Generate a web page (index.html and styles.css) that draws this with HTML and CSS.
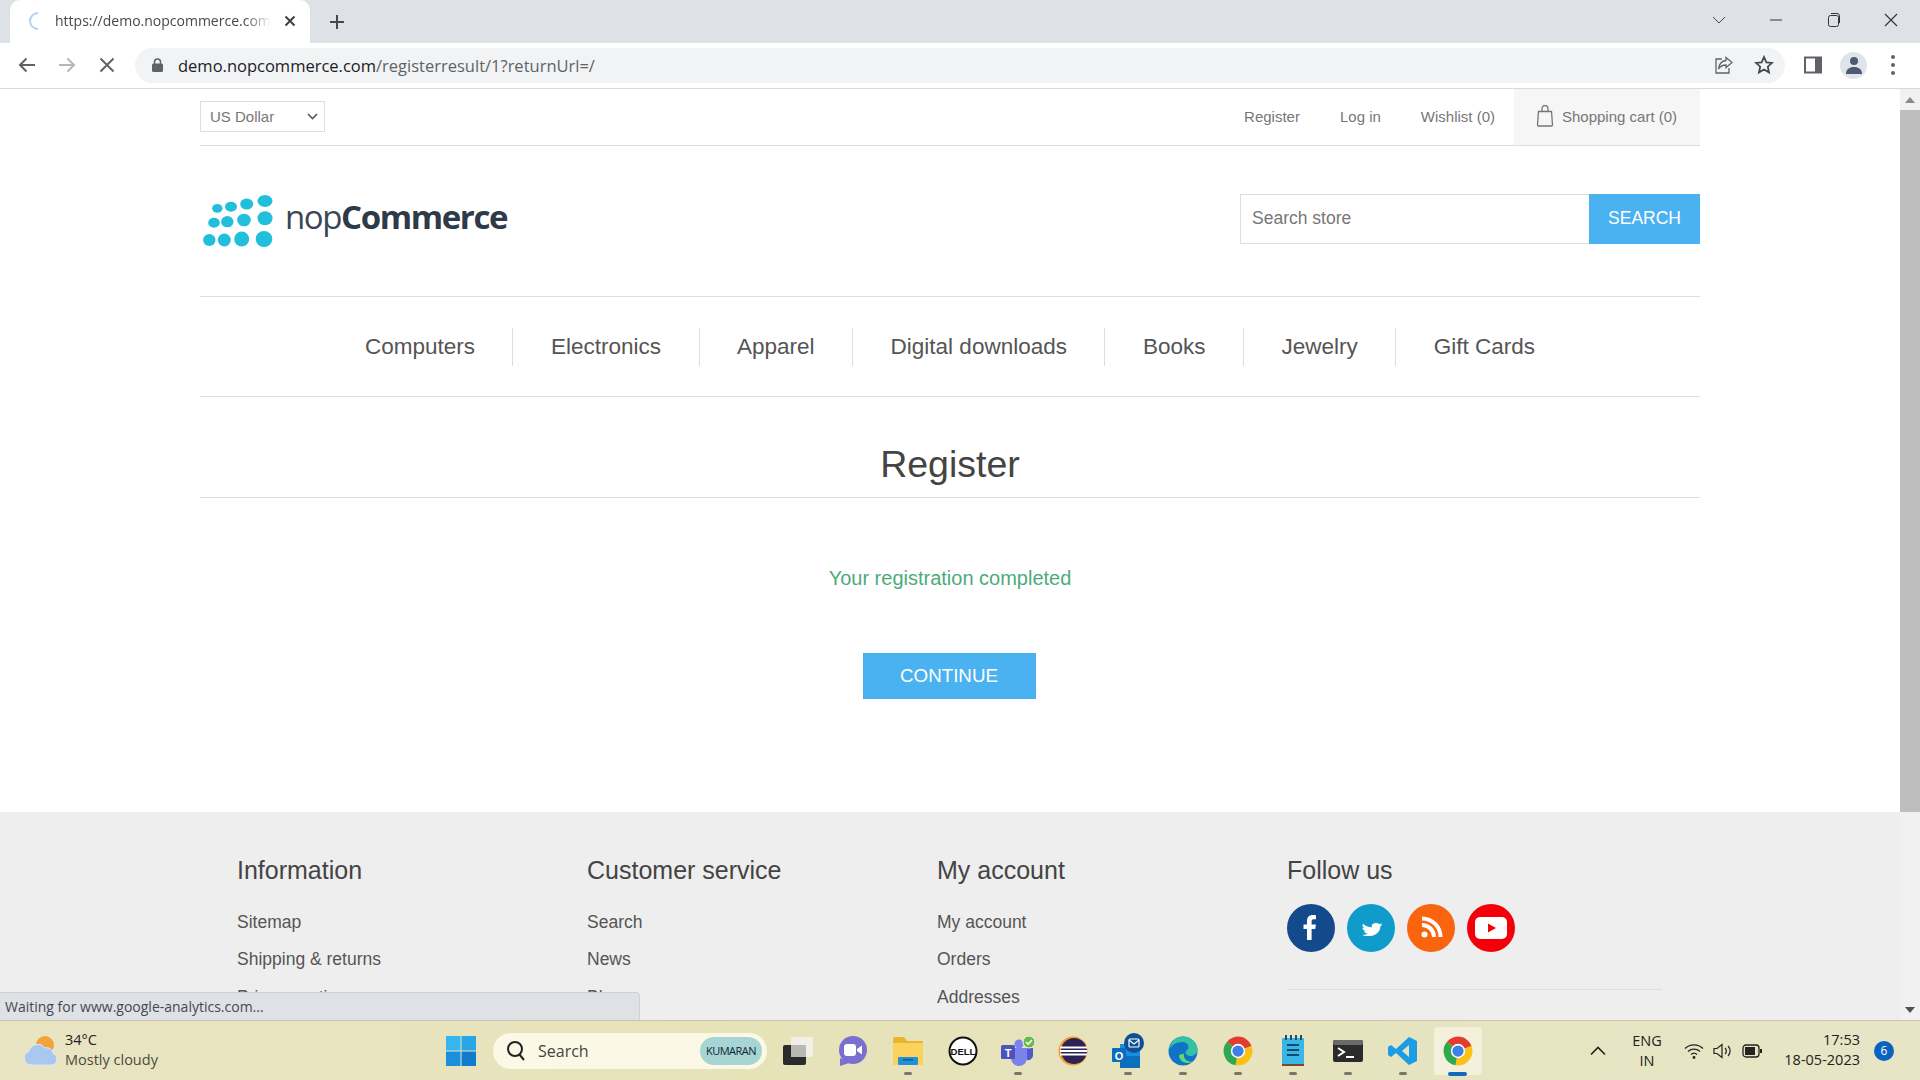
FILE: index.html
```html
<!DOCTYPE html>
<html lang="en">
<head>
    <meta charset="UTF-8">
    <title>nopCommerce demo store. Register</title>
    <link rel="stylesheet" href="styles.css">
</head>
<body>
<svg class="defs" width="0" height="0">
    <symbol id="chrome" viewBox="0 0 48 48">
        <path d="M24 24L6.400 9.200A23 23 0 0 1 45.600 16.100z" fill="#e33b2e"/>
        <path d="M24 24L45.600 16.100A23 23 0 0 1 20 46.650z" fill="#fbc116"/>
        <path d="M24 24L20 46.650A23 23 0 0 1 6.400 9.200z" fill="#2fa84f"/>
        <circle cx="24" cy="24" r="11.500" fill="#fff"/>
        <circle cx="24" cy="24" r="9" fill="#3f7fe8"/>
    </symbol>
</svg>

<div class="tabbar">
    <div class="tab">
        <svg class="spinner" width="18" height="22" viewBox="0 0 18 22"><path d="M13 3a8 8 0 0 0 0 16" fill="none" stroke="#b6cfee" stroke-width="2"/></svg>
        <span class="tab-title">https://demo.nopcommerce.com</span>
        <svg class="tab-close" width="12" height="12" viewBox="0 0 12 12"><path d="M1.500 1.500l9 9M10.500 1.500l-9 9" stroke="#3c4043" stroke-width="2"/></svg>
    </div>
    <svg class="new-tab" width="16" height="16" viewBox="0 0 16 16"><path d="M8 1v14M1 8h14" stroke="#45494d" stroke-width="2"/></svg>
    <div class="window-btns">
        <svg width="14" height="10" viewBox="0 0 14 10"><path d="M1 2l6 6 6-6" fill="none" stroke="#45494d"/></svg>
        <svg width="14" height="4" viewBox="0 0 14 4"><path d="M1 2h12" stroke="#333" stroke-width="1"/></svg>
        <svg width="14" height="16" viewBox="0 0 14 16"><rect x="1.500" y="3.500" width="10" height="11" rx="2" fill="none" stroke="#333"/><path d="M4 1.500h6a2.500 2.500 0 0 1 2.500 2.500v7" fill="none" stroke="#333"/></svg>
        <svg width="14" height="14" viewBox="0 0 14 14"><path d="M1 1l12 12M13 1L1 13" stroke="#333" stroke-width="1.100"/></svg>
    </div>
</div>

<div class="toolbar">
    <svg class="nav-btn" width="18" height="16" viewBox="0 0 18 16"><path d="M17 8H2M8.500 1.500L2 8l6.500 6.500" fill="none" stroke="#5f6368" stroke-width="2"/></svg>
    <svg class="nav-btn" width="18" height="16" viewBox="0 0 18 16"><path d="M1 8h15M9.500 1.500L16 8l-6.500 6.500" fill="none" stroke="#b4b7bb" stroke-width="2"/></svg>
    <svg class="nav-btn" width="18" height="16" viewBox="0 0 16 16"><path d="M1.500 1.500l13 13M14.500 1.500l-13 13" stroke="#5f6368" stroke-width="2"/></svg>
    <div class="omnibox">
        <svg width="11" height="14" viewBox="0 0 11 14"><rect x="0" y="5.500" width="11" height="8.500" rx="1.500" fill="#5f6368"/><path d="M2.500 6V4a3 3 0 0 1 6 0v2" fill="none" stroke="#5f6368" stroke-width="1.500"/></svg>
        <span class="url"><span class="url-host">demo.nopcommerce.com</span>/registerresult/1?returnUrl=/</span>
        <svg class="omni-share" width="20" height="20" viewBox="0 0 20 20"><path d="M12 2.500l6 5-6 5V10C8 10 6 11.500 4.500 14 5 9.500 7.500 6 12 5.500z" fill="none" stroke="#5f6368" stroke-width="1.300"/><path d="M8 4H2v14h13v-5" fill="none" stroke="#5f6368" stroke-width="1.300"/></svg>
        <svg class="omni-star" width="20" height="20" viewBox="0 0 20 20"><path d="M10 2l2.400 5.300 5.600.6-4.200 3.800 1.200 5.700-5-2.900-5 2.900 1.200-5.700L2 7.900l5.600-.6z" fill="none" stroke="#45494d" stroke-width="1.800"/></svg>
    </div>
    <svg class="side-panel" width="18" height="18" viewBox="0 0 18 18"><rect x="1" y="1.500" width="16" height="15" fill="#fff" stroke="#5f6368" stroke-width="2"/><rect x="11" y="1.500" width="6" height="15" fill="#5f6368"/></svg>
    <div class="profile">
        <svg width="18" height="18" viewBox="0 0 18 18"><circle cx="9" cy="5" r="4" fill="#4d5a70"/><path d="M1 18c0-5 3.500-7 8-7s8 2 8 7z" fill="#4d5a70"/></svg>
    </div>
    <div class="dots"><i></i><i></i><i></i></div>
</div>

<div class="viewport">
    <div class="page">
        <div class="container">
            <div class="header-top">
                <div class="currency-wrap">
                    <select class="currency"><option>US Dollar</option></select>
                    <svg class="currency-arrow" width="11" height="7" viewBox="0 0 11 7"><path d="M1 1l4.500 4.500L10 1" fill="none" stroke="#555" stroke-width="1.600"/></svg>
                </div>
                <div class="header-links">
                    <a class="header-link">Register</a>
                    <a class="header-link">Log in</a>
                    <a class="header-link">Wishlist (0)</a>
                    <a class="cart-link">
                        <svg width="18" height="22" viewBox="0 0 18 22"><path d="M2.500 6.500h13l1 13.500a1 1 0 0 1-1 1h-13a1 1 0 0 1-1-1zM6 6.500V3.500a3 3 0 0 1 6 0v3" fill="#f6f6f6" stroke="#777" stroke-width="1.300"/></svg>
                        Shopping cart (0)
                    </a>
                </div>
            </div>
            <div class="header-main">
                <div class="logo">
                    <svg width="78" height="56" viewBox="0 0 78 56">
                        <g fill="#22bfdc">
                            <ellipse cx="14.300" cy="17.300" rx="5.200" ry="4.400"/><ellipse cx="28" cy="15.700" rx="6" ry="5"/><ellipse cx="43.700" cy="13" rx="6.500" ry="5.500"/><ellipse cx="62" cy="10" rx="7.500" ry="6"/>
                            <ellipse cx="11" cy="31.700" rx="5.800" ry="5"/><ellipse cx="24.300" cy="30.700" rx="6.200" ry="5.600"/><ellipse cx="41" cy="29" rx="6.800" ry="6.300"/><ellipse cx="62" cy="27.300" rx="7.500" ry="7"/>
                            <ellipse cx="6.300" cy="49" rx="6.200" ry="6"/><ellipse cx="21.300" cy="49" rx="6.500" ry="6.500"/><ellipse cx="38.700" cy="48" rx="7.500" ry="7.500"/><ellipse cx="61" cy="48" rx="8.300" ry="8"/>
                        </g>
                    </svg>
                    <span class="logo-text">nop<b>Commerce</b></span>
                </div>
                <div class="search-box">
                    <input class="search-input" type="text" placeholder="Search store">
                    <button class="search-btn">SEARCH</button>
                </div>
            </div>
            <ul class="main-menu">
                <li>Computers</li>
                <li>Electronics</li>
                <li>Apparel</li>
                <li>Digital downloads</li>
                <li>Books</li>
                <li>Jewelry</li>
                <li>Gift Cards</li>
            </ul>
            <h1 class="page-title">Register</h1>
            <div class="result">Your registration completed</div>
            <div class="buttons"><button class="continue-btn">CONTINUE</button></div>
        </div>

        <div class="footer">
            <div class="footer-cols">
                <div>
                    <h3>Information</h3>
                    <ul>
                        <li>Sitemap</li>
                        <li>Shipping &amp; returns</li>
                        <li>Privacy notice</li>
                    </ul>
                </div>
                <div>
                    <h3>Customer service</h3>
                    <ul>
                        <li>Search</li>
                        <li>News</li>
                        <li>Blog</li>
                    </ul>
                </div>
                <div>
                    <h3>My account</h3>
                    <ul>
                        <li>My account</li>
                        <li>Orders</li>
                        <li>Addresses</li>
                    </ul>
                </div>
                <div>
                    <h3>Follow us</h3>
                    <div class="social">
                        <svg width="48" height="48" viewBox="0 0 48 48"><circle cx="24" cy="24" r="24" fill="#134a8c"/><path d="M20 36V25h-3.500v-4.500H20V17c0-4 2.300-6 5.800-6 1.500 0 2.700.1 3.200.2v4.100h-2.200c-1.800 0-2.200.9-2.200 2.100v3.100h4.300l-.6 4.500h-3.700v11z" fill="#fff"/></svg>
                        <svg width="48" height="48" viewBox="0 0 48 48"><circle cx="24" cy="24" r="24" fill="#0f9ccb"/><path transform="translate(2.400 8.300) scale(.9 .7)" d="M37 17.500c-1 .5-1.800.6-2.800.8 1-.6 1.700-1.500 2-2.600-.9.500-1.900.9-3 1.100a4.800 4.800 0 0 0-8.200 4.400c-4-.2-7.500-2.100-9.800-5-1.300 2.300-.6 5 1.500 6.400-.8 0-1.500-.2-2.200-.6 0 2.300 1.700 4.300 3.900 4.800-.7.200-1.500.2-2.200.1.600 1.900 2.400 3.300 4.500 3.300-2 1.600-4.600 2.300-7.100 2 6.500 4 20.500 2 20.900-12.400.9-.7 1.800-1.400 2.500-2.300z" fill="#fff"/></svg>
                        <svg width="48" height="48" viewBox="0 0 48 48"><circle cx="24" cy="24" r="24" fill="#fa640f"/><circle cx="17.500" cy="30.500" r="3" fill="#fff"/><path d="M15 21a12 12 0 0 1 12 12M15 14.500A18.500 18.500 0 0 1 33.500 33" fill="none" stroke="#fff" stroke-width="4"/></svg>
                        <svg width="48" height="48" viewBox="0 0 48 48"><circle cx="24" cy="24" r="24" fill="#f40009"/><rect x="8" y="13" width="32" height="22" rx="5" fill="#fff"/><path d="M21 19.500l8 4.500-8 4.500z" fill="#f40009"/></svg>
                    </div>
                    <div class="footer-divider"></div>
                </div>
            </div>
        </div>
    </div>

    <div class="scrollbar">
        <div class="scroll-arrow"><svg width="10" height="6" viewBox="0 0 10 6"><path d="M5 0l5 6H0z" fill="#8a8a8a"/></svg></div>
        <div class="scroll-thumb"></div>
        <div class="scroll-track"></div>
        <div class="scroll-arrow"><svg width="10" height="6" viewBox="0 0 10 6"><path d="M0 0h10L5 6z" fill="#505050"/></svg></div>
    </div>

    <div class="status-bubble">Waiting for www.google-analytics.com...</div>
</div>

<div class="taskbar">
    <div class="weather">
        <svg width="36" height="34" viewBox="0 0 36 34">
            <circle cx="23" cy="11" r="9" fill="#f2a33a"/>
            <path d="M9 31a7 7 0 0 1-2-13.600A9 9 0 0 1 23 14a6 6 0 0 1 8 5.500A6 6 0 0 1 30 31z" fill="#a9c8ef" stroke="#dfe9f5"/>
        </svg>
        <div class="weather-text">
            <span class="weather-temp">34°C</span>
            <span>Mostly cloudy</span>
        </div>
    </div>
    <svg class="start" width="30" height="30" viewBox="0 0 30 30">
        <rect x="0" y="0" width="14.500" height="14.500" fill="#35b6ee"/>
        <rect x="15.500" y="0" width="14.500" height="14.500" fill="#2aa5e6"/>
        <rect x="0" y="15.500" width="14.500" height="14.500" fill="#1a8fdb"/>
        <rect x="15.500" y="15.500" width="14.500" height="14.500" fill="#0f7ccf"/>
    </svg>
    <div class="task-search">
        <svg width="20" height="22" viewBox="0 0 20 22"><circle cx="9" cy="9" r="7" fill="none" stroke="#222" stroke-width="2"/><path d="M13.500 14.500L18 20" stroke="#222" stroke-width="2"/></svg>
        <span class="task-search-label">Search</span>
        <span class="kumaran">KUMARAN</span>
    </div>
    <div class="task-icons">
        <div class="task-icon">
            <svg width="30" height="28" viewBox="0 0 30 28"><rect x="0" y="8" width="23" height="20" rx="2" fill="#2b2b2b"/><rect x="8" y="0" width="22" height="20" rx="2" fill="#f1f0e8"/><rect x="8" y="8" width="15" height="12" fill="#b9b9b4"/></svg>
        </div>
        <div class="task-icon">
            <svg width="30" height="30" viewBox="0 0 30 30"><circle cx="15" cy="14" r="14" fill="#7b6fd0"/><path d="M2 22v8l9-3z" fill="#7b6fd0"/><rect x="6" y="8" width="12" height="12" rx="3" fill="#fff"/><path d="M19 13l5-3.500v9L19 15z" fill="#fff"/></svg>
        </div>
        <div class="task-icon running">
            <svg width="30" height="28" viewBox="0 0 30 28"><path d="M0 2a2 2 0 0 1 2-2h9l3 4h16v24H0z" fill="#e9b52a"/><rect x="0" y="6" width="30" height="22" fill="#fbd35c"/><rect x="5" y="20" width="20" height="8" rx="1" fill="#1f8fd6"/><rect x="10" y="22" width="10" height="1.500" fill="#0b5d9c"/></svg>
        </div>
        <div class="task-icon">
            <svg width="30" height="30" viewBox="0 0 30 30"><circle cx="15" cy="15" r="13.500" fill="#fff" stroke="#111" stroke-width="2"/><text class="dell-text" x="15" y="18.500" text-anchor="middle">DELL</text></svg>
        </div>
        <div class="task-icon running">
            <svg width="36" height="30" viewBox="0 0 36 30"><circle cx="19" cy="8" r="4.500" fill="#7b83eb"/><path d="M11 12h16v10a8 8 0 0 1-16 0z" fill="#7b83eb"/><path d="M27 12h6v8a5 5 0 0 1-6 4z" fill="#5059c9"/><rect x="1" y="9" width="14" height="14" rx="1.500" fill="#4b53bc"/><text class="teams-t" x="8" y="20.500" text-anchor="middle">T</text><circle cx="29" cy="6" r="6" fill="#6bb84b" stroke="#eee"/><path d="M26 6l2.200 2.200L32 4" fill="none" stroke="#fff" stroke-width="1.500"/></svg>
        </div>
        <div class="task-icon">
            <svg width="30" height="30" viewBox="0 0 30 30"><circle cx="15" cy="15" r="14.500" fill="#f39c2e"/><circle cx="16" cy="15" r="13" fill="#2c2255"/><rect x="2" y="10.500" width="27" height="2" fill="#fff"/><rect x="2" y="14" width="27" height="2" fill="#fff"/><rect x="2" y="17.500" width="27" height="2" fill="#fff"/></svg>
        </div>
        <div class="task-icon running">
            <svg width="34" height="36" viewBox="0 0 34 36"><rect x="9" y="11" width="20" height="24" fill="#1490df"/><rect x="9" y="23" width="20" height="12" fill="#0a6fbd"/><rect x="1" y="15" width="14" height="14" rx="1" fill="#0f6cbd"/><text class="teams-t" x="8" y="26.500" text-anchor="middle">O</text><circle cx="23" cy="10" r="10" fill="#0f4f94"/><rect x="18" y="6" width="10" height="8" rx="1" fill="none" stroke="#fff" stroke-width="1.200"/><path d="M18 7l5 4 5-4" fill="none" stroke="#fff" stroke-width="1.200"/></svg>
        </div>
        <div class="task-icon running">
            <svg width="30" height="30" viewBox="0 0 30 30"><circle cx="15" cy="15" r="14.500" fill="#0f73c6"/><path d="M1 14C2 6 8 .5 15 .5c8 0 14.500 6 14.500 13 0 4-3 6.500-7 6.500-3 0-5-1.500-5-3 0-3 3-3 3-6 0-3-3-5-6-5C8 6 3 9 1 14z" fill="#33c3a4"/><path d="M11 19c0 5 4 8 9 8 2 0 3.500-.5 5-1.500-6 1-10-3-9-8z" fill="#5fd876"/></svg>
        </div>
        <div class="task-icon running"><svg width="30" height="30"><use href="#chrome"/></svg></div>
        <div class="task-icon running">
            <svg width="24" height="32" viewBox="0 0 24 32"><rect x="1" y="3" width="22" height="27" rx="1" fill="#38b6e8"/><rect x="1" y="29" width="22" height="2" fill="#7a4a2b"/><path d="M5 0v5M10 0v5M15 0v5M20 0v5" stroke="#1d4e6e" stroke-width="2"/><path d="M6 10h12M6 15h12M6 20h12" stroke="#134a6b" stroke-width="2"/></svg>
        </div>
        <div class="task-icon running">
            <svg width="30" height="22" viewBox="0 0 30 22"><rect width="30" height="22" rx="2" fill="#2b2b2b"/><rect width="30" height="5" rx="2" fill="#6a6a6a"/><path d="M5 8l6 4-6 4" fill="none" stroke="#fff" stroke-width="2"/><path d="M13 17h8" stroke="#fff" stroke-width="2"/></svg>
        </div>
        <div class="task-icon running">
            <svg width="30" height="30" viewBox="0 0 30 30"><path d="M21 1l8 4v20l-8 4-13-12-5 4-3-2V11l3-2 5 4zM21 9l-7 6 7 6z" fill="#1a9ce6"/></svg>
        </div>
        <div class="task-icon active"><svg width="30" height="30"><use href="#chrome"/></svg></div>
    </div>
    <div class="tray">
        <svg class="tray-up" width="16" height="10" viewBox="0 0 16 10"><path d="M1 8.500l7-7 7 7" fill="none" stroke="#222" stroke-width="1.600"/></svg>
        <div class="tray-lang">ENG<br>IN</div>
        <svg width="20" height="16" viewBox="0 0 20 16"><path d="M1 5.500a13 13 0 0 1 18 0M4 8.500a9 9 0 0 1 12 0M7 11.500a4.500 4.500 0 0 1 6 0" fill="none" stroke="#222" stroke-width="1.300"/><circle cx="10" cy="14.500" r="1.400" fill="#222"/></svg>
        <svg width="20" height="16" viewBox="0 0 20 16"><path d="M1 5.500h3L9 1.500v13L4 10.500H1z" fill="none" stroke="#222" stroke-width="1.200"/><path d="M12 5a4 4 0 0 1 0 6M15 3a7 7 0 0 1 0 10" fill="none" stroke="#222" stroke-width="1.200"/></svg>
        <svg width="21" height="14" viewBox="0 0 21 14"><rect x="1" y="1" width="16" height="12" rx="3" fill="none" stroke="#222" stroke-width="1.300"/><rect x="3" y="3" width="10" height="8" fill="#222"/><rect x="18" y="5" width="2" height="4" fill="#222"/></svg>
        <div class="clock">17:53<br>18-05-2023</div>
        <span class="notif">6</span>
    </div>
</div>
</body>
</html>
```

FILE: styles.css
```css
* {
    box-sizing: border-box;
}

html, body {
    margin: 0;
    height: 1080px;
    overflow: hidden;
}

body {
    display: flex;
    flex-direction: column;
    font-family: "Liberation Sans", Arial, sans-serif;
    color: #444;
    background: #fff;
}

ul {
    list-style: none;
    margin: 0;
    padding: 0;
}

.defs {
    position: absolute;
}

/* browser chrome */
.tabbar {
    height: 43px;
    flex: none;
    display: flex;
    align-items: center;
    background: #dee1e6;
    font-family: "Open Sans", sans-serif;
}

.tab {
    width: 300px;
    height: 43px;
    margin-left: 10px;
    padding: 0 14px 2px 15px;
    display: flex;
    align-items: center;
    background: #fff;
    border-radius: 10px 10px 0 0;
}

.spinner {
    flex: none;
    margin-right: 12px;
}

.tab-title {
    width: 216px;
    flex: none;
    overflow: hidden;
    white-space: nowrap;
    font-size: 14px;
    color: #45494d;
    -webkit-mask-image: linear-gradient(90deg, #000 88%, transparent);
    mask-image: linear-gradient(90deg, #000 88%, transparent);
}

.tab-close {
    flex: none;
    margin-left: 13px;
}

.new-tab {
    margin-left: 19px;
}

.window-btns {
    margin-left: auto;
    width: 208px;
    padding: 0 22px 4px 0;
    display: flex;
    justify-content: space-between;
    align-items: center;
}

.toolbar {
    height: 46px;
    flex: none;
    display: flex;
    align-items: center;
    padding: 0 0 1px 18px;
    background: #fff;
    border-bottom: 1px solid #d9dadc;
}

.nav-btn {
    margin-right: 22px;
}

.omnibox {
    width: 1650px;
    height: 35px;
    margin-left: -3px;
    padding: 0 0 0 17px;
    display: flex;
    align-items: center;
    background: #f1f3f4;
    border-radius: 18px;
}

.url {
    margin-left: 15px;
    font-family: "Open Sans", sans-serif;
    font-size: 16.500px;
    color: #5f6368;
}

.url-host {
    color: #202124;
}

.omni-share {
    margin-left: auto;
}

.omni-star {
    margin: 0 11px 0 20px;
}

.side-panel {
    margin-left: 19px;
}

.profile {
    width: 27px;
    height: 27px;
    margin-left: 18px;
    display: flex;
    align-items: center;
    justify-content: center;
    background: #dfe3ea;
    border-radius: 50%;
}

.dots {
    margin-left: 24px;
    display: flex;
    flex-direction: column;
    gap: 4px;
}

.dots i {
    display: block;
    width: 4px;
    height: 4px;
    border-radius: 50%;
    background: #5f6368;
}

/* page */
.viewport {
    position: relative;
    flex: 1;
    min-height: 0;
    display: flex;
    overflow: hidden;
}

.page {
    flex: 1;
    min-width: 0;
    overflow: hidden;
    background: #fff;
}

.container {
    width: 1500px;
    margin: 0 auto;
}

.header-top {
    height: 57px;
    display: flex;
    align-items: center;
    justify-content: space-between;
    border-bottom: 1px solid #ddd;
}

.currency-wrap {
    position: relative;
    display: flex;
    margin-bottom: 1px;
}

.currency {
    width: 125px;
    height: 31px;
    padding: 0 0 1px 9px;
    border: 1px solid #ddd;
    background: #fff;
    font-family: "Liberation Sans", Arial, sans-serif;
    font-size: 15px;
    color: #777;
    appearance: none;
}

.currency-arrow {
    position: absolute;
    right: 7px;
    top: 12px;
    pointer-events: none;
}

.header-links {
    height: 56px;
    display: flex;
    align-items: center;
    font-size: 15px;
    color: #777;
}

.header-link {
    margin-right: 40px;
    padding-bottom: 2px;
}

.header-link:nth-child(3) {
    margin-right: 19px;
}

.cart-link {
    width: 186px;
    height: 56px;
    padding: 0 0 2px 22px;
    display: flex;
    align-items: center;
    gap: 8px;
    background: #f6f6f6;
}

.header-main {
    padding: 45px 0 49px;
    display: flex;
    align-items: center;
    justify-content: space-between;
    border-bottom: 1px solid #ddd;
}

.logo {
    display: flex;
    align-items: center;
    padding-left: 3px;
    gap: 4px;
}

.logo-text {
    padding-bottom: 5px;
    font-family: "Open Sans", sans-serif;
    font-size: 33px;
    letter-spacing: -1.400px;
    color: #3b4654;
}

.logo-text b {
    font-weight: 700;
    color: #2f3a48;
}

.search-box {
    display: flex;
}

.search-input {
    width: 349px;
    height: 50px;
    padding: 0 11px 2px;
    border: 1px solid #ddd;
    border-right: none;
    outline: none;
    font-family: "Liberation Sans", Arial, sans-serif;
    font-size: 17.500px;
}

.search-input::placeholder {
    color: #777;
    opacity: 1;
}

.search-btn {
    width: 111px;
    height: 50px;
    padding-bottom: 2px;
    border: none;
    background: #4ab2f1;
    color: #fff;
    font-family: "Liberation Sans", Arial, sans-serif;
    font-size: 17.500px;
}

.main-menu {
    height: 100px;
    display: flex;
    align-items: center;
    justify-content: center;
    border-bottom: 1px solid #ddd;
    font-size: 22.500px;
}

.main-menu li {
    height: 38px;
    padding: 0 37.500px;
    line-height: 38px;
    color: #555;
}

.main-menu li + li {
    border-left: 1px solid #ddd;
}

.page-title {
    margin: 0;
    padding: 45px 0 10px;
    border-bottom: 1px solid #ddd;
    font-size: 37.500px;
    font-weight: 400;
    line-height: 45px;
    text-align: center;
    color: #444;
}

.result {
    margin-top: 70px;
    font-size: 20px;
    line-height: 20px;
    text-align: center;
    color: #4cab7a;
}

.buttons {
    margin-top: 65px;
    padding-right: 2px;
    text-align: center;
}

.continue-btn {
    width: 173px;
    height: 46px;
    border: none;
    background: #4ab2f1;
    color: #fff;
    font-family: "Liberation Sans", Arial, sans-serif;
    font-size: 18.750px;
}

/* footer */
.footer {
    margin-top: 113px;
    padding-top: 43px;
    height: 300px;
    background: #eee;
}

.footer-cols {
    width: 1500px;
    margin: 0 auto;
    padding-left: 37px;
    display: grid;
    grid-template-columns: 350px 350px 350px 375px;
}

.footer-cols h3 {
    margin: 0 0 18.500px;
    font-size: 25px;
    font-weight: 400;
    line-height: 30px;
    color: #444;
}

.footer-cols li {
    height: 37.500px;
    line-height: 37.500px;
    font-size: 17.500px;
    color: #555;
}

.social {
    display: flex;
    gap: 12px;
    margin-top: 19px;
}

.footer-divider {
    margin-top: 37px;
    border-top: 1px solid #ddd;
}

/* scrollbar */
.scrollbar {
    width: 20px;
    flex: none;
    display: flex;
    flex-direction: column;
    background: #f1f1f1;
}

.scroll-arrow {
    height: 21px;
    display: flex;
    align-items: center;
    justify-content: center;
}

.scroll-thumb {
    height: 702px;
    background: #bebebe;
}

.scroll-track {
    flex: 1;
}

.status-bubble {
    position: absolute;
    left: 0;
    bottom: 0;
    width: 640px;
    height: 28px;
    padding-left: 5px;
    line-height: 28px;
    background: #dee1e6;
    border-top: 1px solid #cdd0d5;
    border-right: 1px solid #cdd0d5;
    border-top-right-radius: 4px;
    font-family: "Open Sans", sans-serif;
    font-size: 14px;
    color: #45494d;
}

/* windows taskbar */
.taskbar {
    height: 60px;
    flex: none;
    display: flex;
    align-items: center;
    border-top: 1px solid #c9c7ab;
    background: linear-gradient(90deg, #e9e5c3, #e6e3b9 40%, #e7e5c6);
    font-family: "Open Sans", sans-serif;
    color: #222;
}

.weather {
    width: 446px;
    padding-left: 22px;
    display: flex;
    align-items: center;
    gap: 7px;
}

.weather-text {
    display: flex;
    flex-direction: column;
    padding-bottom: 2px;
    font-size: 14.500px;
    line-height: 20px;
    color: #4b4b3a;
}

.weather-temp {
    color: #222;
}

.start {
    flex: none;
}

.task-search {
    width: 274px;
    height: 36px;
    margin-left: 17px;
    padding: 0 5px 0 13px;
    display: flex;
    align-items: center;
    background: #fbf8e6;
    border-radius: 18px;
}

.task-search-label {
    margin-left: 12px;
    font-size: 16px;
    color: #444;
}

.kumaran {
    width: 62px;
    height: 28px;
    margin-left: auto;
    background: #a6d5d3;
    border-radius: 14px;
    font-size: 11px;
    line-height: 28px;
    text-align: center;
    letter-spacing: -0.500px;
    color: #123;
}

.task-icons {
    margin-left: 3px;
    display: flex;
}

.task-icon {
    position: relative;
    width: 55px;
    height: 48px;
    display: flex;
    align-items: center;
    justify-content: center;
}

.task-icon svg {
    flex: none;
    position: relative;
}

.task-icon.running::after {
    content: "";
    position: absolute;
    left: 24px;
    bottom: 0;
    width: 8px;
    height: 3px;
    border-radius: 2px;
    background: #77776a;
}

.task-icon.active::before {
    content: "";
    position: absolute;
    left: 4px;
    top: 0;
    width: 48px;
    height: 48px;
    background: #f3f1dc;
    border-radius: 4px;
}

.task-icon.active::after {
    content: "";
    position: absolute;
    left: 18px;
    bottom: -1px;
    width: 19px;
    height: 4px;
    border-radius: 2px;
    background: #0f6cbd;
}

.dell-text {
    font-family: "Liberation Sans", sans-serif;
    font-size: 9.500px;
    font-weight: 700;
    fill: #111;
}

.teams-t {
    font-family: "Liberation Sans", sans-serif;
    font-size: 11px;
    font-weight: 700;
    fill: #fff;
}

.tray {
    margin-left: auto;
    padding-right: 26px;
    display: flex;
    align-items: center;
}

.tray-up {
    margin-right: 16px;
}

.tray-lang {
    width: 50px;
    margin-right: 12px;
    font-size: 14.500px;
    line-height: 20px;
    text-align: center;
}

.tray svg + svg {
    margin-left: 9px;
}

.clock {
    width: 97px;
    padding-bottom: 2px;
    font-size: 14.500px;
    line-height: 20px;
    text-align: right;
}

.notif {
    width: 20px;
    height: 20px;
    margin-left: 14px;
    border-radius: 50%;
    background: #0b63c1;
    color: #fff;
    font-size: 12px;
    line-height: 20px;
    text-align: center;
}
```
